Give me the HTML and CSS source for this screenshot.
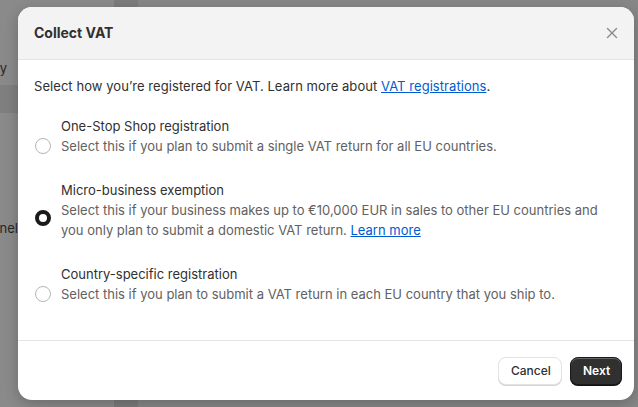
FILE: index.html
```html
<!DOCTYPE html>
<html lang="en">
<head>
<meta charset="utf-8">
<title>Collect VAT</title>
<link rel="stylesheet" href="styles.css">
</head>
<body>
<div class="backdrop">
  <nav class="sidebar">
    <div class="nav-item nav-item--privacy">Privacy</div>
    <div class="nav-item nav-item--active"></div>
    <div class="nav-item nav-item--channel">Channel</div>
  </nav>
  <div class="stripe"></div>
</div>

<div class="modal" role="dialog" aria-labelledby="modal-title">
  <header class="modal-header">
    <h2 id="modal-title" class="modal-title">Collect VAT</h2>
    <button class="close-btn" aria-label="Close">
      <svg width="12" height="12" viewBox="0 0 12 12"><path d="M1.5 1.5l9 9M10.5 1.5l-9 9" stroke="#8a8a8a" stroke-width="1.4" stroke-linecap="round" fill="none"/></svg>
    </button>
  </header>

  <div class="modal-body">
    <p class="intro">Select how you’re registered for VAT. Learn more about <a href="#">VAT registrations</a>.</p>

    <div class="options">
      <label class="option">
        <span class="radio"></span>
        <span class="option-title">One-Stop Shop registration</span>
        <span class="option-desc">Select this if you plan to submit a single VAT return for all EU countries.</span>
      </label>

      <label class="option">
        <span class="radio radio--checked"></span>
        <span class="option-title">Micro-business exemption</span>
        <span class="option-desc">Select this if your business makes up to €10,000 EUR in sales to other EU countries and you only plan to submit a domestic VAT return. <a href="#">Learn more</a></span>
      </label>

      <label class="option">
        <span class="radio"></span>
        <span class="option-title">Country-specific registration</span>
        <span class="option-desc">Select this if you plan to submit a VAT return in each EU country that you ship to.</span>
      </label>
    </div>
  </div>

  <footer class="modal-footer">
    <button class="btn btn--secondary">Cancel</button>
    <button class="btn btn--primary">Next</button>
  </footer>
</div>
</body>
</html>
```

FILE: styles.css
```css
* { box-sizing: border-box; }

html, body {
  margin: 0;
  padding: 0;
  width: 638px;
  height: 407px;
  overflow: hidden;
}

body {
  font-family: Inter, "Noto Sans", "Liberation Sans", sans-serif;
  background: #878787;
  color: #303030;
  position: relative;
}

.backdrop {
  display: flex;
  height: 407px;
}

.sidebar {
  width: 114px;
  background: #8a8a8a;
  padding-top: 56px;
  display: flex;
  flex-direction: column;
}

.nav-item {
  font-size: 13px;
  line-height: 24px;
  color: #262626;
  white-space: nowrap;
  text-align: right;
}

.nav-item--privacy {
  width: 18px;
  overflow: hidden;
  direction: rtl;
  padding-right: 11px;
  height: 24px;
}

.nav-item--active {
  margin-top: 5px;
  height: 28px;
  width: 114px;
  background: #7f7f7f;
}

.nav-item--channel {
  margin-top: 103px;
  width: 18px;
  overflow: hidden;
  direction: rtl;
  padding-right: 0;
}

.stripe {
  width: 24px;
  background: #7c7c7c;
}

.modal {
  position: absolute;
  left: 18px;
  top: 7px;
  width: 616px;
  height: 393px;
  background: #fff;
  border-radius: 14px;
  overflow: hidden;
  box-shadow: 0 4px 14px rgba(0, 0, 0, 0.22);
  display: flex;
  flex-direction: column;
}

.modal-header {
  height: 53px;
  background: #f3f3f3;
  border-bottom: 1px solid #e3e3e3;
  display: flex;
  align-items: center;
  justify-content: space-between;
  padding: 0 16px 1px 16px;
}

.modal-title {
  margin: 0;
  font-size: 14px;
  font-weight: 650;
  line-height: 20px;
  color: #303030;
}

.close-btn {
  border: 0;
  background: none;
  padding: 0;
  width: 20px;
  height: 20px;
  display: flex;
  align-items: center;
  justify-content: center;
  margin-right: -4px;
}

.modal-body {
  padding: 16px 16px 36px 16px;
  font-size: 13px;
  line-height: 20px;
  border-bottom: 1px solid #e3e3e3;
}

.intro {
  margin: 0 0 20px 0;
  color: #303030;
  letter-spacing: 0.06px;
}

a {
  color: #005bd3;
  text-decoration: underline;
}

.options {
  display: flex;
  flex-direction: column;
  gap: 24px;
}

.option {
  display: grid;
  grid-template-columns: 17px 1fr;
  column-gap: 9px;
  padding-left: 1px;
}

.option-title {
  grid-column: 2;
  grid-row: 1;
  color: #303030;
}

.option-desc {
  grid-column: 2;
  grid-row: 2;
  color: #616161;
}

.radio {
  grid-column: 1;
  grid-row: 2;
  align-self: center;
  width: 16px;
  height: 16px;
  border-radius: 50%;
  border: 1px solid #b5b5b5;
  background: #fff;
}

.radio--checked {
  border: 4.5px solid #1a1a1a;
  margin-top: -4px;
}

.modal-footer {
  flex: 1;
  display: flex;
  justify-content: flex-end;
  align-items: flex-start;
  gap: 8px;
  padding: 16px 12px 0 16px;
}

.btn {
  font-family: inherit;
  font-size: 12px;
  height: 28px;
  line-height: 16px;
  border-radius: 8px;
  padding: 0 12px;
  cursor: pointer;
}

.btn--secondary {
  background: #fff;
  color: #303030;
  font-weight: 550;
  border: 1px solid #e3e3e3;
  box-shadow: 0 1px 0 #d4d4d4;
  width: 64px;
}

.btn--primary {
  background: #303030;
  color: #fff;
  font-weight: 600;
  border: 1px solid #1a1a1a;
  box-shadow: inset 0 1px 0 rgba(255, 255, 255, 0.25), 0 1px 0 #111;
  width: 52px;
}
```
